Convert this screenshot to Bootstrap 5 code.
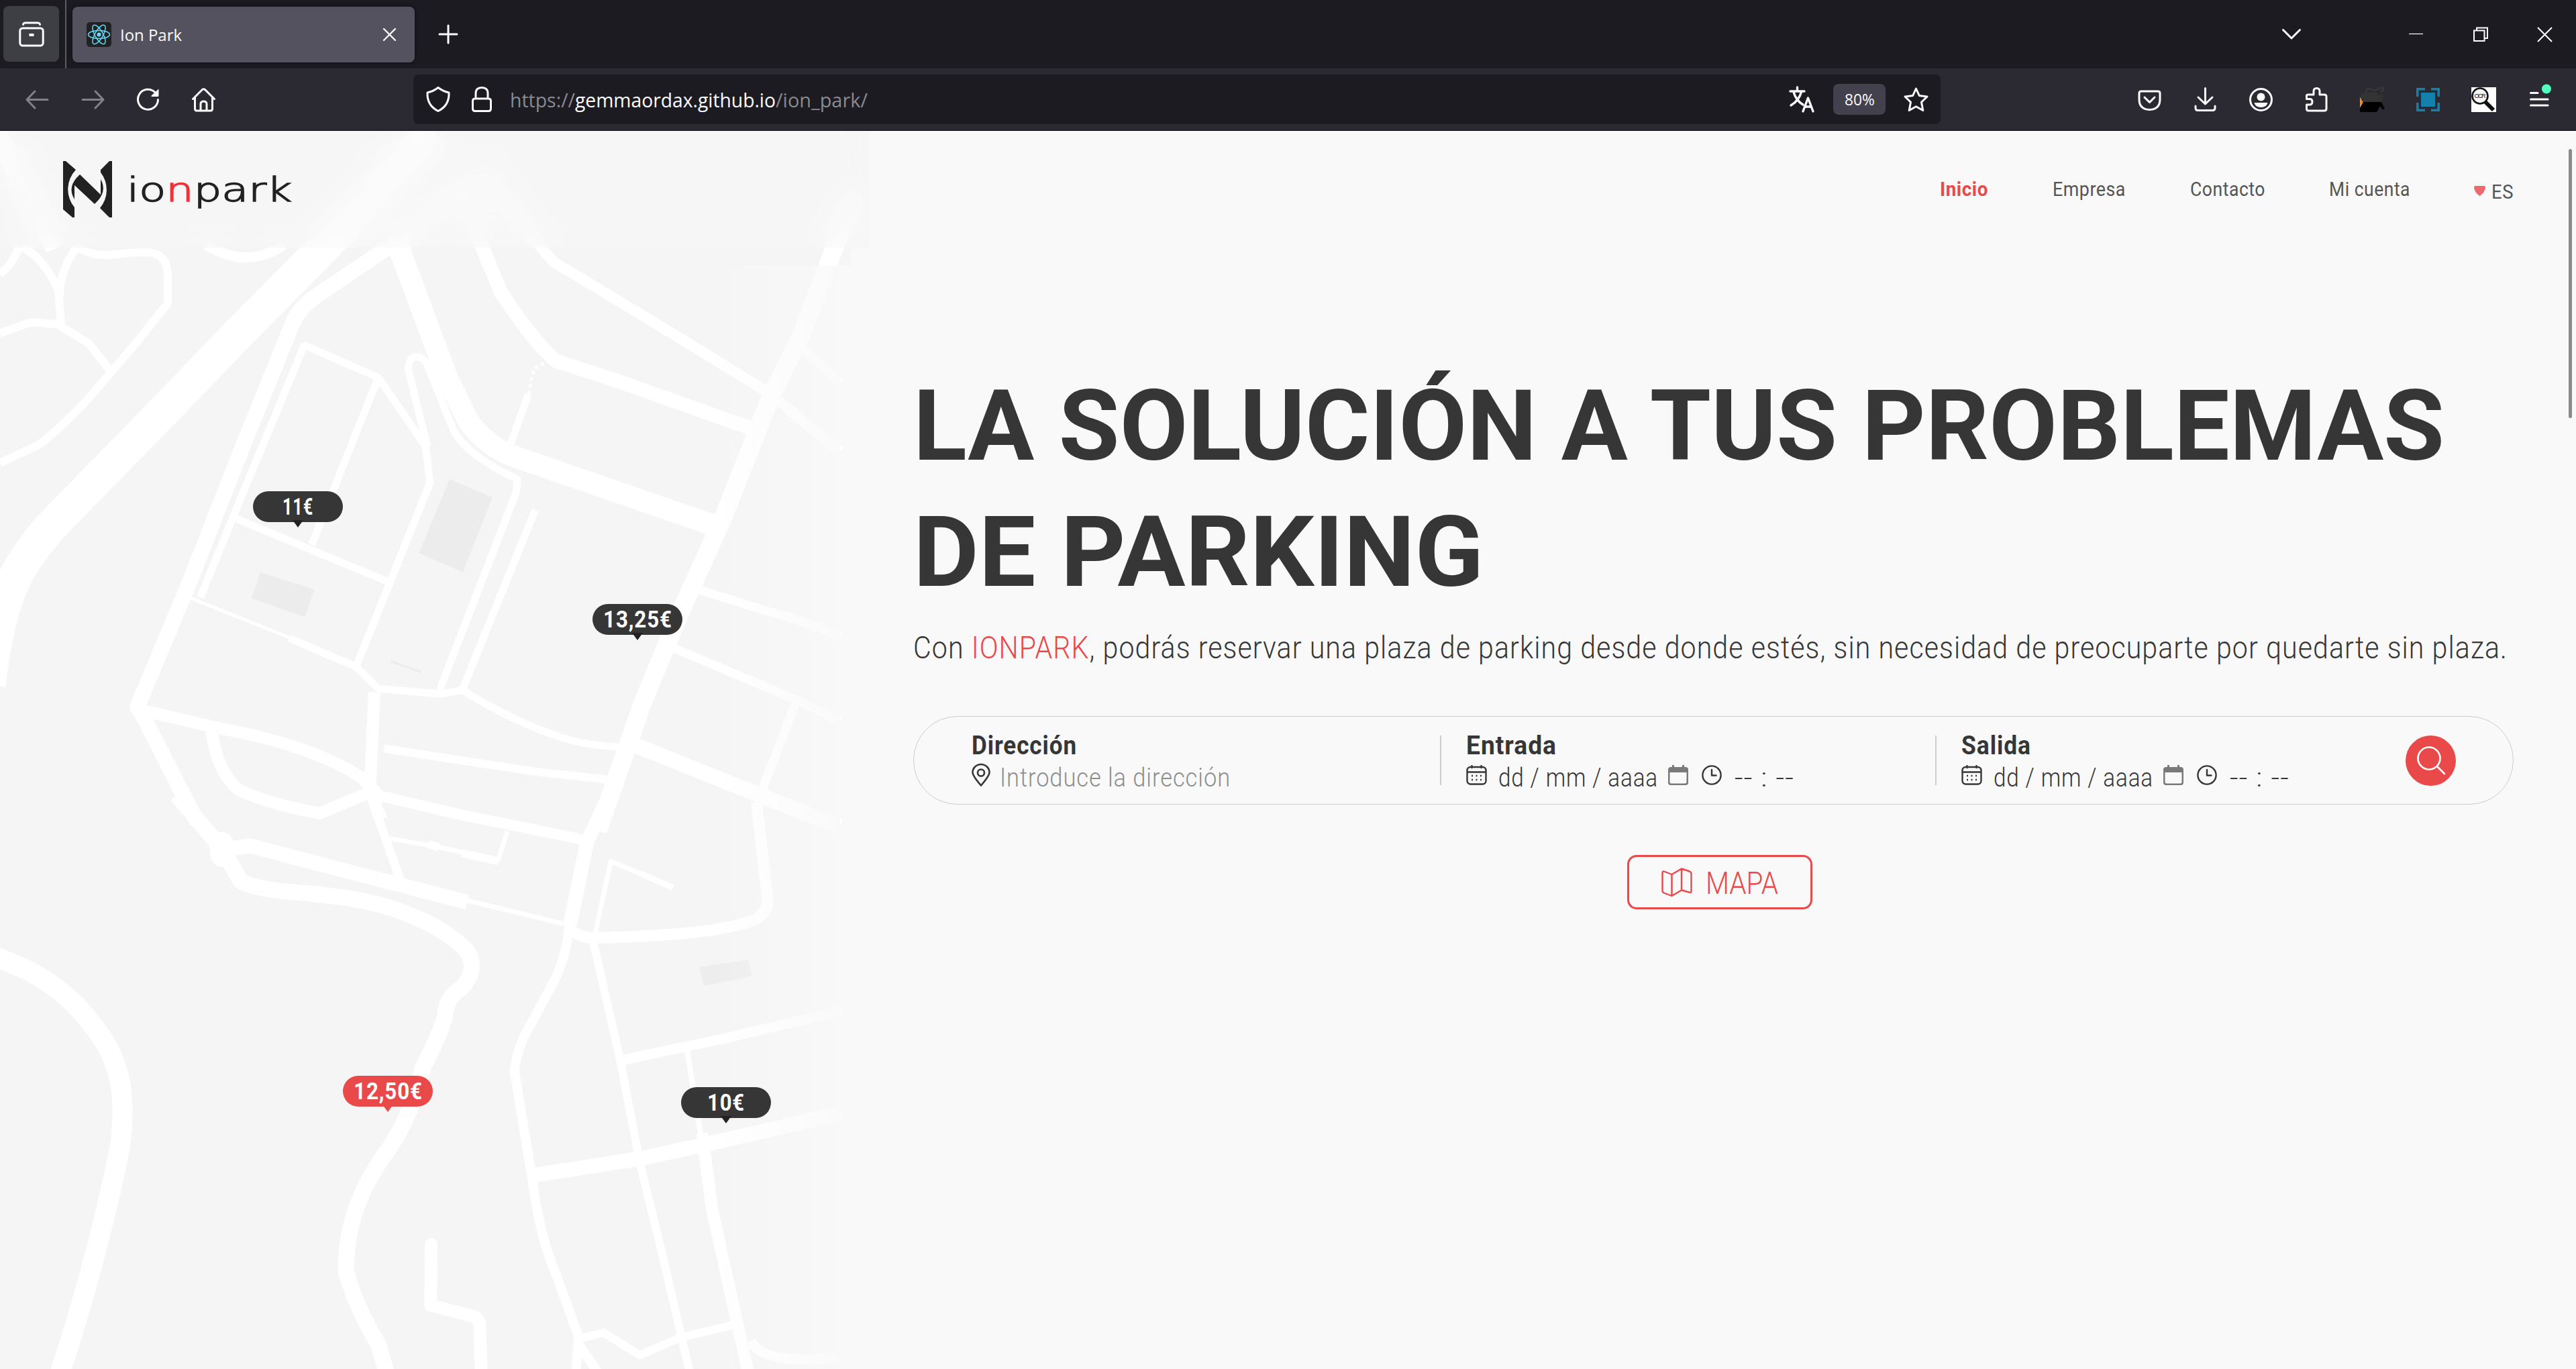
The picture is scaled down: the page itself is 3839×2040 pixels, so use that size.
<!DOCTYPE html>
<html lang="es">
<head>
<meta charset="utf-8">
<title>Ion Park</title>
<link rel="stylesheet" href="https://cdn.jsdelivr.net/npm/bootstrap@5.3.0/dist/css/bootstrap.min.css">
<script src="https://cdn.jsdelivr.net/npm/bootstrap@5.3.0/dist/js/bootstrap.bundle.min.js"></script>
<style>
html,body{height:100%;overflow:hidden}
body{background:#f9f9f9;font-family:Roboto,"Liberation Sans",sans-serif;color:#363636}
svg{display:block;flex:none;overflow:visible}
[data-w]{display:inline-block;white-space:nowrap;transform-origin:0 50%}
.ln{fill:none;stroke:currentColor;stroke-linecap:round;stroke-linejoin:round}
.chrome-ui{font-family:"Open Sans","Noto Sans",sans-serif;color:#fbfbfe}
.tabstrip{height:102px;background:#1c1b22;padding:0 35px 0 5px}
.viewbtn{width:83px;height:83px;border-radius:8px;background:#3e3f44;margin-top:-1px}
.vrule{width:2px;height:102px;background:#5b5b61;margin:0 9px}
.tabitem{width:510px;height:83px;border-radius:8px;background:#54525e;padding:0 28px 0 21px;font-size:24px;box-shadow:0 0 6px #0008}
.toolrow{height:93px;background:#2b2a33;border-bottom:1px solid #08080c;padding:0 36px 0 37px}
.urlbox{width:2276px;height:74px;border-radius:8px;background:#1c1b22;margin-left:294px;padding:0 18px 0 19px;font-size:29px}
.dimmed{color:#8a898f}
.zoomchip{width:78px;height:46px;border-radius:8px;background:#42414d;font-size:23px}
.pagehead{height:174px;margin-bottom:-174px;z-index:3;padding:0 93px 0 94px;font-size:30px;color:#555;letter-spacing:.6px}
.pagehead::before{content:"";position:absolute;inset:0 2543px 0 0;z-index:-1;background:rgba(249,249,249,.3);backdrop-filter:blur(20px)}
.pagehead span,.pagehead b{margin-top:-2px}
.act{color:#ea4949}
.mappane{width:1361px;height:1845px}
.hero{width:2385px;padding-top:347px}
.bigtitle{font-size:146px;line-height:188px;font-weight:700;margin:0;white-space:nowrap}
.tagline{font-size:46px;line-height:60px;font-weight:300;margin:17px 0 0;white-space:nowrap;letter-spacing:1.2px}
.searchbar{height:132px;margin-top:72px;border:1px solid #ccc;border-radius:66px;padding:0 85px 0 86px;font-size:38px}
.fld{height:74px}
.fld+.fld{border-left:2px solid #ccc;padding-left:37px}
.fld b{line-height:31px;height:38px;flex:none;letter-spacing:1px}
.fld .vals{height:42px;flex:none;line-height:44px;font-weight:300;letter-spacing:1px}
.fld .vals span{padding-top:8px}
.gobtn{width:75px;height:75px;background:#ea4949}
.mapbtn{width:276px;height:81px;border:3px solid #ea4949;border-radius:14px;color:#ea4949;font-size:46px;font-weight:300;margin:75px auto 0;position:relative;left:9px}
.mapbtn span{padding-top:3px}
.pin{position:absolute;width:134px;height:46px;border-radius:23px;background:#363636;color:#fff;font-weight:700;font-size:35px;line-height:48px;text-align:center;letter-spacing:1px}
.pin::after{content:"";position:absolute;left:59px;top:43px;border:8px solid transparent;border-top:11px solid #222;border-bottom:0}
.pin.hot{background:#ea4949}.pin.hot::after{border-top-color:#ea4949}
.thumb{position:absolute;left:3828px;top:222px;width:5px;height:401px;border-radius:3px;background:#8b8b8b;z-index:5}
</style>
</head>
<body class="d-flex flex-column">
<svg width="0" height="0" class="position-absolute"><defs>
<symbol id="cal" viewBox="0 0 31 30"><g class="ln" stroke-width="2.4"><rect x="1.5" y="3" width="28" height="25.5" rx="5"/><path d="M2 10.500H29M8.500 1V4M22.500 1V4"/></g><path d="M8 16h2M14.500 16h2M21 16h2M8 22h2M14.500 22h2M21 22h2" stroke="currentColor" stroke-width="2.500"/></symbol>
<symbol id="calg" viewBox="0 0 30 30"><path d="M4 3H6V0H9V3H21V0H24V3H26Q30 3 30 7V26Q30 30 26 30H4Q0 30 0 26V7Q0 3 4 3ZM2.500 11V25Q2.500 27.500 5 27.500H25Q27.500 27.500 27.500 25V11Z" fill="#7a7a7a" fill-rule="evenodd"/></symbol>
<symbol id="clk" viewBox="0 0 30 30"><g class="ln" stroke-width="2.400"><circle cx="15" cy="15" r="13.600"/><path d="M15 7V15.500H21.500"/></g></symbol>
</defs></svg>

<div class="chrome-ui">
  <div class="tabstrip d-flex align-items-center">
    <div class="viewbtn d-flex align-items-center justify-content-center"><svg width="38" height="38" viewBox="0 0 38 38"><g class="ln" stroke-width="3"><rect x="1.800" y="10" width="34.400" height="26" rx="4"/><path d="M6.500 4.500Q7 2 10 2H28Q31 2 31.500 4.500"/><path d="M15.500 20H22.500" stroke-linecap="butt" stroke-width="4"/></g></svg></div>
    <div class="vrule"></div>
    <div class="tabitem d-flex align-items-center">
      <svg width="37" height="37" viewBox="0 0 37 37"><rect width="37" height="37" rx="5" fill="#222"/><g fill="none" stroke="#61dafb" stroke-width="1.500"><ellipse cx="18.500" cy="18.500" rx="16" ry="6"/><ellipse cx="18.500" cy="18.500" rx="16" ry="6" transform="rotate(60 18.500 18.500)"/><ellipse cx="18.500" cy="18.500" rx="16" ry="6" transform="rotate(120 18.500 18.500)"/></g><circle cx="18.500" cy="18.500" r="3.100" fill="#61dafb"/></svg>
      <span class="me-auto" style="margin-left:13px;padding-top:1px" data-w="92">Ion Park</span>
      <svg width="19" height="19" viewBox="0 0 19 19"><path class="ln" stroke-width="2.400" d="M1 1L18 18M18 1L1 18"/></svg>
    </div>
    <svg width="28" height="28" viewBox="0 0 28 28" style="margin-left:36px" class="me-auto"><path class="ln" stroke-width="3" d="M14 1V27M1 14H27"/></svg>
    <div class="d-flex align-items-center">
      <svg width="28" height="16" viewBox="0 0 28 16" style="margin-right:161px"><path class="ln" stroke-width="3" d="M1.500 1.500L14 14L26.500 1.500"/></svg>
      <svg width="21" height="21" viewBox="0 0 21 21" style="margin-right:75px"><path d="M0 9.500H21" stroke="#fff" stroke-width="1.200"/></svg>
      <svg width="22" height="22" viewBox="0 0 22 22" style="margin-right:73px"><path d="M1 5.500H16.500V21H1ZM5 5.500V1.500H21V17H17" fill="none" stroke="#fff" stroke-width="2"/></svg>
      <svg width="23" height="23" viewBox="0 0 23 23"><path d="M1 1L22 22M22 1L1 22" stroke="#fff" stroke-width="2"/></svg>
    </div>
  </div>
  <div class="toolrow d-flex align-items-center">
    <div class="d-flex" style="gap:45.700px">
      <svg width="37" height="37" viewBox="0 0 37 37" opacity=".42"><path class="ln" stroke-width="3" d="M34 18.500H3M15 6L3 18.500L15 31"/></svg>
      <svg width="37" height="37" viewBox="0 0 37 37" opacity=".42"><path class="ln" stroke-width="3" d="M3 18.500H34M22 6L34 18.500L22 31"/></svg>
      <svg width="37" height="37" viewBox="0 0 37 37"><path class="ln" stroke-width="3" d="M33.500 18.500A15 15 0 1 1 29 7.500"/><path fill="#fbfbfe" d="M34.500 2.500V12.500Q34.500 14 33 14H24.500Q22.500 13.500 24 12Z"/></svg>
      <svg width="37" height="37" viewBox="0 0 37 37"><path class="ln" stroke-width="3" d="M2.500 17.500L16.500 3.500Q18.500 2 20.500 3.500L34.500 17.500M5.500 15V32Q5.500 35 8.500 35H28.500Q31.500 35 31.500 32V15M14 35V25Q14 21 18.500 21Q23 21 23 25V35"/></svg>
    </div>
    <div class="urlbox d-flex align-items-center">
      <svg width="36" height="38" viewBox="0 0 36 38"><path class="ln" stroke-width="3" d="M18 1.500Q25 7 34 9Q35 28 18 36.500Q1 28 2 9Q11 7 18 1.500Z"/></svg>
      <svg width="30" height="38" viewBox="0 0 30 38" style="margin-left:32px"><path class="ln" stroke-width="3" d="M5 18H25Q28.500 18 28.500 21.500V33Q28.500 36.500 25 36.500H5Q1.500 36.500 1.500 33V21.500Q1.500 18 5 18ZM6 18V10Q6 1.500 15 1.500Q24 1.500 24 10V18"/></svg>
      <div class="me-auto" style="margin-left:27px;padding-top:2px"><span class="dimmed" data-w="97">https://</span><span data-w="299">gemmaordax.github.io</span><span class="dimmed" data-w="137">/ion_park/</span></div>
      <svg width="37" height="37" viewBox="0 0 37 37" style="margin-right:28px"><path class="ln" stroke-width="3.400" stroke-linecap="butt" d="M1 6H22M11.500 0V6M6 7Q9 19 20 26M17.500 7Q14 20 2 27M20 36L27.500 16L35 36M22.500 29H32.500"/></svg>
      <div class="zoomchip d-flex align-items-center justify-content-center"><span data-w="45">80%</span></div>
      <svg width="37" height="37" viewBox="0 0 37 37" style="margin-left:27px"><path class="ln" stroke-width="3" d="M18.500 2L23.300 12.500L35 14L26.500 22.300L28.800 34.500L18.500 28.700L8.200 34.500L10.500 22.300L2 14L13.700 12.500Z"/></svg>
    </div>
    <div class="d-flex ms-auto" style="gap:46px">
      <svg width="37" height="37" viewBox="0 0 37 37"><path class="ln" stroke-width="3" d="M6 6H31Q34 6 34 9V18Q34 33 18.500 33.500Q3 33 3 18V9Q3 6 6 6ZM11 15L18.500 22.500L26 15"/></svg>
      <svg width="37" height="37" viewBox="0 0 37 37"><path class="ln" stroke-width="3" d="M18.500 1.500V24M8 15L18.500 25L29 15M4 28V31Q4 34.500 7.500 34.500H29.500Q33 34.500 33 31V28"/></svg>
      <svg width="37" height="37" viewBox="0 0 37 37"><circle class="ln" stroke-width="3" cx="18.500" cy="18.500" r="16"/><circle cx="18.500" cy="14.500" r="6" fill="#fbfbfe"/><path d="M8.500 23H28.500Q27 30 18.500 30Q10 30 8.500 23Z" fill="#fbfbfe"/></svg>
      <svg width="37" height="37" viewBox="0 0 37 37"><path class="ln" stroke-width="3" d="M3.500 14V12.500Q3.500 11 6 11H14V6Q14 1.500 18.500 1.500Q23 1.500 23 6V11H30Q33 11 33 14V32Q33 35 30 35H6.500Q3.500 35 3.500 32V26H8Q12 26 12 21.500Q12 17.500 8 17.500H3.500Z"/></svg>
      <svg width="37" height="37" viewBox="0 0 37 37"><path d="M0 14L5 23L0 31Z" fill="#ff8a0c"/><path d="M4 8H25Q29 14 36 10L32 22H5L0 14Z" fill="#333"/><path d="M9 9V6Q10 2 15 2Q20 6 25 4Q28 0 35 1V5Q32 7 30 4" fill="none" stroke="#3a3a3a" stroke-width="2"/><path d="M5 22H32L37 33H34L30 28L25 37H0V31Z" fill="#000"/></svg>
      <svg width="37" height="37" viewBox="0 0 37 37" fill="#1481ad"><rect x="8" y="8" width="21" height="21"/><path d="M1 1H14V4.500H4.500V14H1ZM23 1H36V14H32.500V4.500H23ZM1 23H4.500V32.500H14V36H1ZM32.500 23H36V36H23V32.500H32.500Z"/></svg>
      <svg width="37" height="37" viewBox="0 0 37 37"><rect width="37" height="37" fill="#fff"/><path d="M21 22L33 34" stroke="#111" stroke-width="6"/><circle cx="13" cy="13" r="11.500" fill="#f5f5f5" stroke="#111" stroke-width="2.600"/><text x="4.500" y="16" font-family="Liberation Sans,sans-serif" font-size="9" textLength="17" fill="#111">OCR</text></svg>
      <svg width="37" height="37" viewBox="0 0 37 37"><path class="ln" stroke-width="3" d="M5.500 8.500H16M5.500 18H31M5.500 27H31"/><circle cx="29" cy="2.500" r="7" fill="#54ffbd"/></svg>
    </div>
  </div>
</div>

<header class="pagehead d-flex align-items-center position-relative">
  <svg width="342" height="84" viewBox="0 0 342 84" style="letter-spacing:0"><g fill="#222"><path d="M0 0H4L19 13A42 42 0 0 0 17 69V84H14L0 72Z"/><path d="M73 0H69L56 13V17A42 42 0 0 1 55 70L69 84H73Z"/><path d="M25 20L56 50V27Q67 46 47 64L17 36V57Q5 38 25 20Z"/></g><text x="95" y="60" font-family="DejaVu Sans,sans-serif" font-weight="200" font-size="49" textLength="246" lengthAdjust="spacingAndGlyphs" fill="#222" stroke="#222" stroke-width="1.500">io<tspan fill="#ee3338" stroke="#ee3338">n</tspan>park</text></svg>
  <nav class="ms-auto d-flex align-items-center">
    <b class="act" data-w="72">Inicio</b><span style="margin-left:96px" data-w="109">Empresa</span><span style="margin-left:96px" data-w="112">Contacto</span><span style="margin-left:95px" data-w="121">Mi cuenta</span>
    <svg width="17" height="15" viewBox="0 0 17 15" style="margin:5px 0 0 95px"><path d="M2 0H15Q17 0 17 3Q16 10 8.500 15Q1 10 0 3Q0 0 2 0Z" fill="#ef6a6a"/></svg>
    <span style="margin:6px 0 0 9px" data-w="33">ES</span>
  </nav>
</header>
<main class="d-flex flex-fill">
  <div class="mappane position-relative overflow-hidden">
    <svg width="1361" height="1845" viewBox="0 195 1361 1845">
      <defs><linearGradient id="fade"><stop offset="0" stop-color="#f9f9f9" stop-opacity="0"/><stop offset=".85" stop-color="#f9f9f9" stop-opacity=".7"/><stop offset="1" stop-color="#f9f9f9" stop-opacity=".9"/></linearGradient>
      <style>.rd path{fill:none;stroke:#fff;vector-effect:non-scaling-stroke;stroke-linejoin:round}</style></defs>
      <rect x="0" y="195" width="1250" height="1845" fill="#f5f5f5"/>
      <rect x="1250" y="195" width="46" height="175" fill="#f5f5f5"/>
      <rect x="1250" y="369" width="18" height="27" fill="#f6f6f6"/>
      <g transform="translate(0 370) scale(.8291 .5421)" class="rd">
        <path stroke-width="50" d="M780 -320L580 0L425 240L280 470L110 735Q30 860 8 980Q-10 1070 -20 1200"/>
        <path stroke-width="23" d="M840 -180L705 -10L560 140Q535 170 525 210L440 530L340 920L247 1260L262 1300L320 1475L355 1578"/>
        <path stroke-width="30" d="M-10 -330L60 -120L100 0"/>
        <path stroke-width="21" d="M840 -180L865 -10M865 -220L970 -10"/>
        <path stroke-width="12" d="M35 -5Q20 50 0 70M40 -5Q80 30 105 115L110 215L160 262L197 335M138 -5Q105 70 108 130M138 -5C180 40 220 5 270 12C310 20 300 80 302 150L250 250L197 345L155 420Q90 520 70 540L0 590M110 210L57 203L0 233"/>
        <path stroke-width="15" d="M370 -10Q445 60 510 -10"/>
        <path stroke-width="32" d="M710 -30L805 360L840 470Q870 540 920 570L1280 760"/>
        <path stroke-width="11" d="M545 265L680 355L765 545L773 645L640 1150M548 262L440 660L360 960M680 355L560 815M420 740L695 915M768 545L735 340C730 285 760 290 768 320L815 500Q840 570 930 635L928 670L790 1215M962 720L832 1210"/>
        <path stroke-width="5" d="M340 960L520 1070"/>
        <path stroke-width="11" d="M520 1072L640 1150L680 1210L790 1225L832 1215Q920 1300 1010 1345Q1050 1365 1115 1372M915 550L950 400"/>
        <path stroke-width="5" stroke-dasharray="5 5" d="M950 400L960 330L985 310"/>
        <path stroke-width="21" d="M865 -10L900 120Q960 260 1000 310L1120 370L1350 495"/>
        <path stroke-width="16" d="M970 -10Q990 40 1020 60L1220 245L1385 400L1510 560"/>
        <path stroke-width="27" d="M1540 -150L1502 -10L1440 240L1385 410L1300 740L1220 1010L1155 1250L1130 1360L1075 1600"/>
        <path stroke-width="13" d="M1255 938L1385 1000Q1460 1030 1510 1070M1205 1095L1430 1240L1510 1300M1430 1250L1370 1490M1440 270L1510 370"/>
        <path stroke-width="23" d="M1140 1365L1360 1500L1510 1590"/>
        <path stroke-width="18" d="M250 1268L390 1318Q560 1365 650 1455L690 1520M380 1325Q390 1440 430 1490Q490 1530 575 1553L665 1495M673 1220L665 1490"/>
        <path stroke-width="12" d="M665 1490L690 1568M690 1375L830 1408L970 1440L1090 1460"/>
        <path stroke-width="15" d="M670 1500L830 1558"/>
        <path d="M808 635L885 685L832 890L753 838ZM468 890L565 938L548 1013L452 962Z" style="fill:#ececec;stroke:none"/>
        <path d="M703 1135L757 1165" style="stroke:#ececec" stroke-width="3"/>
      </g>
      <g transform="translate(0 1190) scale(.8291 .5421)" class="rd">
        <path stroke-width="24" d="M318 -10L400 140L432 225Q450 250 550 260Q660 275 720 310Q800 355 840 420Q860 470 830 520Q800 550 800 600Q790 650 760 740Q740 870 700 960Q620 1120 622 1300Q640 1400 680 1500L695 1578"/>
        <path stroke-width="36" stroke-linecap="round" d="M398 125L400 155"/>
        <path stroke-width="13" d="M665 -10L720 225"/>
        <path stroke-width="16" d="M690 -5L830 45L1045 112"/>
        <path stroke-width="7" d="M700 110L780 130L895 170L912 90"/>
        <path stroke-width="12" d="M770 125L790 135M830 150L895 172"/>
        <path stroke-width="22" d="M400 140L450 130L650 210L840 285"/>
        <path stroke-width="7" d="M840 280L1015 345M1070 370L1098 172L1160 212"/><path stroke-width="9" d="M1150 205L1210 245"/>
        <path stroke-width="21" d="M1095 -10L1055 120L1025 345"/>
        <path stroke-width="30" d="M-10 435Q100 490 160 610Q210 700 218 800Q225 900 210 1000Q170 1290 108 1578"/>
        <path stroke-width="19" stroke-linecap="round" d="M775 1225L774 1393L855 1425L862 1440L865 1590"/>
        <path stroke-width="14" d="M1025 330Q1020 420 1000 490L940 660Q925 720 925 750L958 1060Q970 1200 1000 1310L1040 1480L1035 1578M1040 1500L1075 1578"/>
        <path stroke-width="17" d="M1020 350Q1040 385 1070 383Q1300 375 1360 330Q1380 310 1380 280L1360 10"/>
        <path stroke-width="12" d="M1065 385L1115 720L1150 1000L1190 1250L1225 1480L1240 1578M1040 1485L1085 1468L1150 1530L1225 1480L1325 1445"/>
        <path stroke-width="15" d="M1115 720L1300 660L1510 585M1350 1490Q1370 1560 1510 1535"/>
        <path stroke-width="22" d="M960 1035L1150 990L1300 940L1510 865"/>
        <path stroke-width="8" d="M1235 690L1262 950"/>
        <path stroke-width="18" d="M1262 920L1280 1130L1325 1440L1345 1578"/>
        <path d="M1257 463L1345 443L1352 488L1265 515Z" style="fill:#ededed;stroke:none"/>
      </g>
      <rect x="1060" y="396" width="192" height="1644" fill="url(#fade)"/>
    </svg>
    <div class="pin" style="left:377px;top:537px"><span data-w="46">11€</span></div>
    <div class="pin" style="left:883px;top:705px"><span data-w="103">13,25€</span></div>
    <div class="pin hot" style="left:511px;top:1408px"><span data-w="103">12,50€</span></div>
    <div class="pin" style="left:1015px;top:1425px"><span data-w="56">10€</span></div>
  </div>
  <section class="hero">
    <h1 class="bigtitle"><span data-w="2282">LA SOLUCIÓN A TUS PROBLEMAS</span><br><span data-w="850">DE PARKING</span></h1>
    <p class="tagline"><span data-w="2376">Con <span class="act">IONPARK</span>, podrás reservar una plaza de parking desde donde estés, sin necesidad de preocuparte por quedarte sin plaza.</span></p>
    <div class="searchbar d-flex align-items-center">
      <div class="fld d-flex flex-column" style="width:698px"><b><span data-w="157">Dirección</span></b>
        <div class="vals d-flex align-items-center"><svg width="28" height="34" viewBox="0 0 28 34"><path class="ln" stroke-width="2.600" d="M14 32.500Q1.500 18 1.500 13A12.500 12 0 0 1 26.500 13Q26.500 18 14 32.500Z"/><circle class="ln" stroke-width="2.600" cx="14" cy="13.500" r="5"/></svg><span style="color:#8e8e8e;margin-left:14px" data-w="344">Introduce la dirección</span></div></div>
      <div class="fld d-flex flex-column" style="width:738px"><b><span data-w="135">Entrada</span></b>
        <div class="vals d-flex align-items-center"><svg width="31" height="30"><use href="#cal"/></svg><span style="margin-left:17px" data-w="238">dd / mm / aaaa</span><svg width="30" height="30" style="margin-left:15px"><use href="#calg"/></svg><svg width="30" height="30" style="margin-left:20px"><use href="#clk"/></svg><span style="margin-left:19px" data-w="89">-- : --</span></div></div>
      <div class="fld d-flex flex-column"><b><span data-w="104">Salida</span></b>
        <div class="vals d-flex align-items-center"><svg width="31" height="30"><use href="#cal"/></svg><span style="margin-left:17px" data-w="238">dd / mm / aaaa</span><svg width="30" height="30" style="margin-left:15px"><use href="#calg"/></svg><svg width="30" height="30" style="margin-left:20px"><use href="#clk"/></svg><span style="margin-left:19px" data-w="89">-- : --</span></div></div>
      <div class="gobtn rounded-circle ms-auto d-flex align-items-center justify-content-center"><svg width="42" height="42" viewBox="0 0 42 42" style="color:#fff"><circle class="ln" stroke-width="2.600" cx="18" cy="18" r="16.500"/><path class="ln" stroke-width="2.600" d="M30 30L41 41"/></svg></div>
    </div>
    <div class="mapbtn d-flex align-items-center justify-content-center"><svg width="46" height="44" viewBox="0 0 46 44" style="margin-right:20px"><path class="ln" stroke-width="2.400" d="M1.500 8Q1.500 4 5 6L15.500 10L30 1.500L42 5.500Q44.500 6.500 44.500 9V35Q44.500 38 41 36.500L30 33.500L15.500 42L3.500 37.500Q1.500 36.500 1.500 34ZM15.500 10V42M30 1.500V33.500"/></svg><span data-w="108">MAPA</span></div>
  </section>
</main>
<div class="thumb"></div>
<script>
// Condense or widen each label so that it takes the width given in data-w.
document.querySelectorAll('[data-w]').forEach(function (el) {
  var target = +el.dataset.w, natural = el.getBoundingClientRect().width;
  el.style.width = target + 'px';
  el.style.transform = 'scaleX(' + target / natural + ')';
});
</script>
</body>
</html>
